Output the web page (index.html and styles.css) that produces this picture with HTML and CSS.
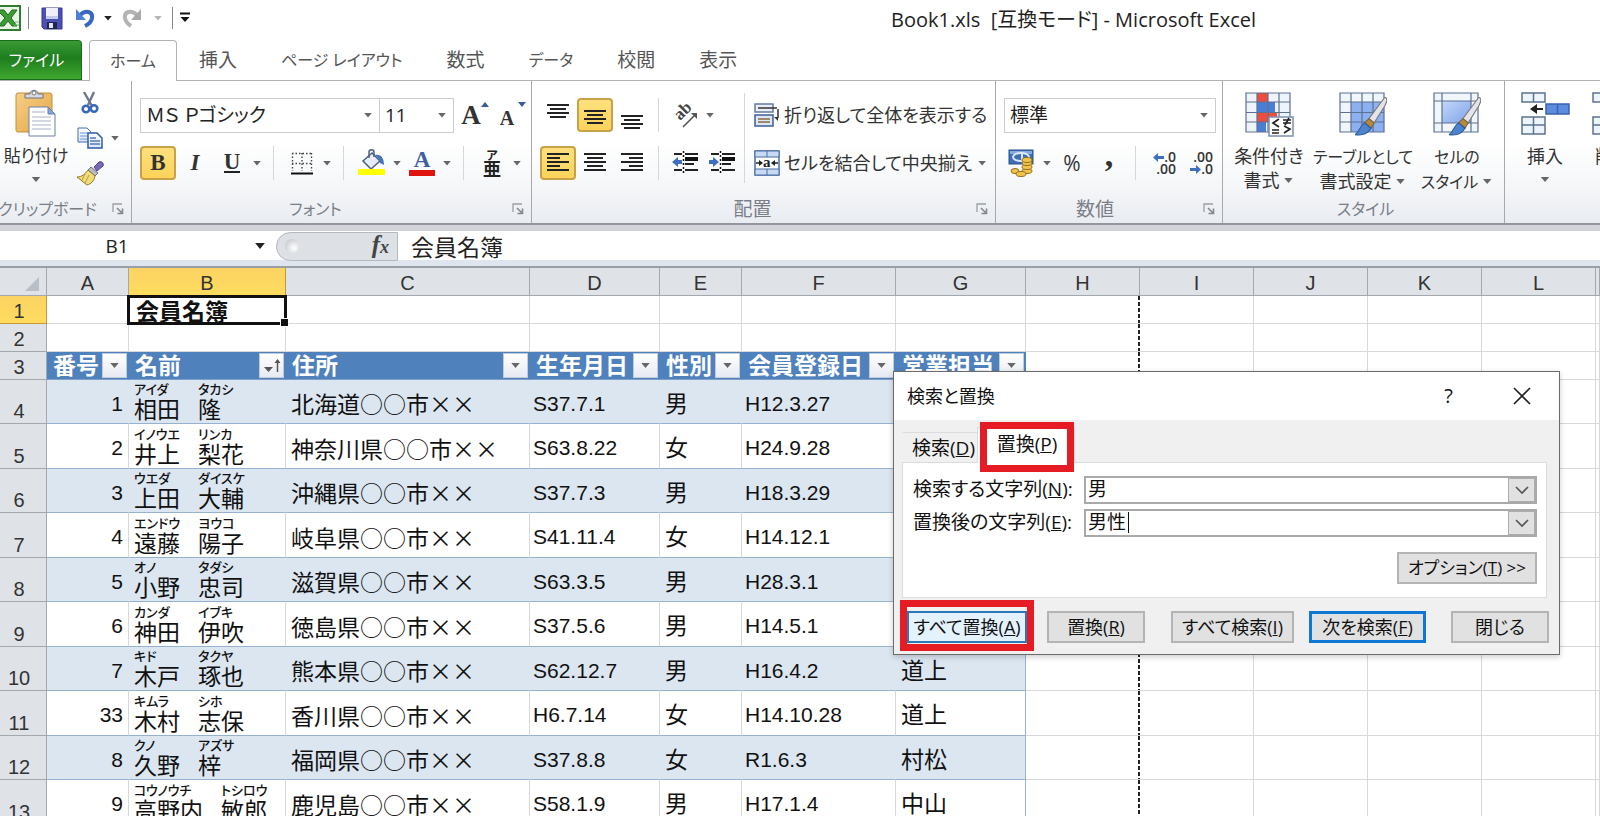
FILE: index.html
```html
<!DOCTYPE html>
<html lang="ja">
<head>
<meta charset="utf-8">
<title>Book1.xls [互換モード] - Microsoft Excel</title>
<link rel="stylesheet" href="styles.css">
</head>
<body>
<svg class="defs" aria-hidden="true">
  <defs>
    <linearGradient id="gBlue" x1="0" y1="0" x2="1" y2="1"><stop offset="0" stop-color="#c3d7fa"/><stop offset="1" stop-color="#7da3ea"/></linearGradient>
    <linearGradient id="gPaper" x1="0" y1="0" x2="0" y2="1"><stop offset="0" stop-color="#ffffff"/><stop offset="1" stop-color="#dbe6f5"/></linearGradient>
    <linearGradient id="gBoard" x1="0" y1="0" x2="1" y2="1"><stop offset="0" stop-color="#f7cf86"/><stop offset="1" stop-color="#e3a544"/></linearGradient>
    <symbol id="launch" viewBox="0 0 12 12"><path d="M1 9V1h9" fill="none" stroke="#9a9da2" stroke-width="1.3"/><path d="M5 5l5 5M10.500 5.500v5h-5" fill="none" stroke="#85888d" stroke-width="1.600"/></symbol>
    <symbol id="brush" viewBox="0 0 30 36"><path d="M28 0c3 1 2 4 0 8L18 24l-5-4z" fill="#e4e4e6" stroke="#77797e"/><path d="M13 20l5 4-3 5-6-5z" fill="#b58a3c" stroke="#7a6235"/><path d="M9 24l6 5c-3 5-9 7-15 6 4-2 4-8 9-11z" fill="#4d84cf" stroke="#2d5a9c"/></symbol>
  </defs>
</svg>
<div class="app">
  <header class="titlebar">
    <div class="quick">
      <svg class="logo" width="21" height="26" viewBox="0 0 21 26"><rect x="-5" y="1" width="25" height="24" fill="#eaf4e6" stroke="#2f7d32" stroke-width="2"/><path d="M-3 5h7l4 5 4-5h5l-6 8 6 8h-5l-4-5-4 5h-6l7-8z" fill="#3d9a35" stroke="#1f6b22"/><path d="M15 17h4M14 20h5" stroke="#7fb77b"/></svg>
      <i class="qsep"></i>
      <button class="q" aria-label="上書き保存"><svg width="22" height="23" viewBox="0 0 22 23"><path d="M1 1h20v21H3l-2-2z" fill="#4b50b4" stroke="#34388f"/><path d="M5 1h12v11H5z" fill="#eef1fb"/><path d="M5 9h12v3H5z" fill="#c4cbea"/><path d="M6 15h10v7H6z" fill="#22264f"/><path d="M8 16h4v5H8z" fill="#dfe3f4"/></svg></button>
      <button class="q" aria-label="元に戻す"><svg width="20" height="20" viewBox="0 0 20 20"><path d="M5 7c6-6 13-3 12 3-.5 4-3 6-7 8" fill="none" stroke="#3a68c0" stroke-width="4"/><path d="M1 1v11h10z" fill="#4f80d6"/></svg></button>
      <i class="tri dark"></i>
      <button class="q" aria-label="やり直し"><svg width="20" height="20" viewBox="0 0 20 20"><path d="M15 7C9 1 2 4 3 10c.5 4 3 6 6 8" fill="none" stroke="#b4b4b4" stroke-width="4"/><path d="M19 1v11H9z" fill="#a9a9a9"/></svg></button>
      <i class="tri pale"></i>
      <i class="qsep"></i>
      <button class="q more" aria-label="カスタマイズ"><svg width="12" height="12" viewBox="0 0 12 12"><path d="M1 1.500h10" stroke="#111" stroke-width="2"/><path d="M1.500 5h9L6 10z" fill="#111"/></svg></button>
    </div>
    <h1 class="doc-title">Book1.xls&nbsp; [互換モード] - Microsoft Excel</h1>
  </header>

  <nav class="tabs">
    <button class="tab file kana">ファイル</button>
    <button class="tab active kana">ホーム</button>
    <button class="tab">挿入</button>
    <button class="tab kana">ページ レイアウト</button>
    <button class="tab">数式</button>
    <button class="tab kana">データ</button>
    <button class="tab">校閲</button>
    <button class="tab">表示</button>
  </nav>

  <section class="ribbon">
    <div class="group clipboard">
      <div class="body">
        <button class="big paste"><svg width="44" height="48" viewBox="0 0 44 48"><rect x="2" y="4" width="36" height="39" rx="2" fill="url(#gBoard)" stroke="#c58e3a"/><path d="M11 9V5h5c0-5 8-5 8 0h5v4z" fill="#d9dbe0" stroke="#6f7278"/><circle cx="20" cy="4" r="2" fill="#fff" stroke="#6f7278"/><path d="M15 18h19l7 7v22H15z" fill="#fff" stroke="#6881a8"/><path d="M34 18v7h7z" fill="#7fa6de" stroke="#6881a8"/><path d="M18 23h13M18 28h19M18 32h19M18 36h19M18 40h19" stroke="#aab4c4"/></svg><span>貼り付け</span><i class="tri"></i></button>
        <div class="stack">
          <button class="tool" aria-label="切り取り"><svg width="18" height="24" viewBox="0 0 18 24"><path d="M3 1l8 14M13 1L7 14" stroke="#6b7890" stroke-width="2.400" fill="none"/><circle cx="5" cy="18" r="3.300" fill="none" stroke="#3968b4" stroke-width="2.600"/><circle cx="13" cy="17.500" r="3.300" fill="none" stroke="#3968b4" stroke-width="2.600"/></svg></button>
          <div class="row"><button class="tool" aria-label="コピー"><svg width="26" height="22" viewBox="0 0 26 22"><path d="M1 1h9l4 4v10H1z" fill="url(#gPaper)" stroke="#3f6db3"/><path d="M3 6h8M3 9h8M3 12h8" stroke="#6f96d3"/><path d="M11 6h9l5 5v10H11z" fill="url(#gPaper)" stroke="#2f5ca6" stroke-width="1.500"/><path d="M13 11h6M13 14h10M13 17h10" stroke="#4f7ac0" stroke-width="1.500"/></svg></button><i class="tri"></i></div>
          <button class="tool" aria-label="書式のコピー"><svg width="28" height="25" viewBox="0 0 28 25"><path d="M18 6l5-5c3-1 5 1 4 4l-6 5z" fill="#7a68b6" stroke="#54458c"/><path d="M15 6l7 6-3 3-7-6z" fill="#b9bcc4" stroke="#6e7078"/><path d="M12 9l7 6c-1 5-4 8-8 9L1 16c5 0 8-3 11-7z" fill="#f2dc7a" stroke="#8f7a2c"/><path d="M9 13l-3 6M13 14l-4 8" stroke="#b59a3a"/></svg></button>
        </div>
      </div>
      <div class="foot"><span class="kana">クリップボード</span><button class="launch" aria-label="クリップボードの詳細"><svg width="12" height="12"><use href="#launch"/></svg></button></div>
    </div>

    <div class="group font">
      <div class="body rows">
        <div class="row">
          <label class="combo name"><select aria-label="フォント"><option>ＭＳ Ｐゴシック</option></select><i class="tri"></i></label><label class="combo size"><select aria-label="フォント サイズ"><option>11</option></select><i class="tri"></i></label>
          <button class="tool" aria-label="フォント サイズの拡大"><span class="serif grow">A</span><svg class="mark" width="8" height="6" viewBox="0 0 8 6"><path d="M0 5h8L4 0z" fill="#3d5a9a"/></svg></button>
          <button class="tool" aria-label="フォント サイズの縮小"><span class="serif shrink">A</span><svg class="mark" width="8" height="6" viewBox="0 0 8 6"><path d="M0 0h8L4 5z" fill="#3d5a9a"/></svg></button>
        </div>
        <div class="row">
          <button class="tool on"><b class="serif">B</b></button>
          <button class="tool"><em class="serif">I</em></button>
          <button class="tool"><span class="serif under">U</span></button><i class="tri"></i>
          <i class="sep"></i>
          <button class="tool" aria-label="罫線"><svg width="22" height="23" viewBox="0 0 22 23"><path d="M1 1.500h20M1 11.500h20M1.500 1v18M11 1v18M20.500 1v18" stroke="#444" stroke-width="1.400" stroke-dasharray="1.500 2"/><path d="M0 21.500h22" stroke="#111" stroke-width="2"/></svg></button><i class="tri"></i>
          <i class="sep"></i>
          <button class="tool" aria-label="塗りつぶしの色"><svg width="28" height="28" viewBox="0 0 28 28"><path d="M5 12l9-8 8 8-9 8z" fill="#e6ecf6" stroke="#4d5f80" stroke-width="1.500"/><path d="M11 9V3c0-3 5-3 5 0v5" fill="none" stroke="#4d5f80" stroke-width="1.500"/><path d="M17 6c6-1 9 3 9 10l-4-2-1-4z" fill="#4474c0"/><path d="M0 20h27v6H0z" fill="#ffff00"/></svg></button><i class="tri"></i>
          <button class="tool" aria-label="フォントの色"><span class="fontcolor serif">A</span></button><i class="tri"></i>
          <i class="sep"></i>
          <button class="tool phon"><small>ア</small><span>亜</span></button><i class="tri"></i>
        </div>
      </div>
      <div class="foot"><span class="kana">フォント</span><button class="launch" aria-label="フォントの詳細"><svg width="12" height="12"><use href="#launch"/></svg></button></div>
    </div>

    <div class="group align">
      <div class="body">
        <div class="rows">
          <div class="row">
            <button class="tool" aria-label="上揃え"><svg width="22" height="30" viewBox="0 0 22 30"><path d="M0 5h22M3 9h16M0 13h22M3 17h16" stroke="#222" stroke-width="2"/></svg></button>
            <button class="tool on" aria-label="上下中央揃え"><svg width="22" height="30" viewBox="0 0 22 30"><path d="M0 11h22M3 15h16M0 19h22M3 23h16" stroke="#222" stroke-width="2"/></svg></button>
            <button class="tool" aria-label="下揃え"><svg width="22" height="30" viewBox="0 0 22 30"><path d="M0 16h22M3 20h16M0 24h22M3 28h16" stroke="#222" stroke-width="2"/></svg></button>
            <i class="sep tight"></i>
            <button class="tool" aria-label="方向"><svg width="28" height="28" viewBox="0 0 28 28"><text transform="translate(9 20) rotate(-45)" class="abtext">ab</text><path d="M12 26L24 14" stroke="#555" stroke-width="1.600"/><path d="M26 12v6l-6-6z" fill="#555"/></svg></button><i class="tri"></i>
          </div>
          <div class="row">
            <button class="tool on" aria-label="左揃え"><svg width="22" height="22" viewBox="0 0 22 22"><path d="M0 2h22M0 6h13M0 10h22M0 14h13M0 18h22" stroke="#222" stroke-width="2"/></svg></button>
            <button class="tool" aria-label="中央揃え"><svg width="22" height="22" viewBox="0 0 22 22"><path d="M0 2h22M3 6h16M0 10h22M3 14h16M0 18h22" stroke="#222" stroke-width="2"/></svg></button>
            <button class="tool" aria-label="右揃え"><svg width="22" height="22" viewBox="0 0 22 22"><path d="M0 2h22M8 6h14M0 10h22M8 14h14M0 18h22" stroke="#222" stroke-width="2"/></svg></button>
            <i class="sep tight"></i>
            <button class="tool" aria-label="インデントを減らす"><svg width="26" height="26" viewBox="0 0 26 26"><path d="M2 4h8M13 4h13M13 14h9M2 20h8M13 20h13" stroke="#222" stroke-width="2"/><path d="M13 9h13" stroke="#111" stroke-width="4"/><path d="M11.500 1v24" stroke="#111" stroke-width="1.500" stroke-dasharray="2 2"/><path d="M0 12l6-5v3h4v4H6v3z" fill="#3f6fc0"/></svg></button>
            <button class="tool" aria-label="インデントを増やす"><svg width="26" height="26" viewBox="0 0 26 26"><path d="M2 4h8M13 4h13M13 14h9M2 20h8M13 20h13" stroke="#222" stroke-width="2"/><path d="M13 9h13" stroke="#111" stroke-width="4"/><path d="M11.500 1v24" stroke="#111" stroke-width="1.500" stroke-dasharray="2 2"/><path d="M10 12L4 7v3H0v4h4v3z" fill="#3f6fc0"/></svg></button>
          </div>
        </div>
        <i class="tallsep"></i>
        <div class="rows">
          <button class="row wide"><svg width="26" height="26" viewBox="0 0 26 26"><rect x="1" y="2" width="18" height="8" fill="#e9eff8" stroke="#667a9c" stroke-width="1.500"/><path d="M4 6h19" stroke="#333" stroke-width="1.500"/><rect x="1" y="13" width="18" height="11" fill="#dbe7f8" stroke="#3f5f95" stroke-width="1.500"/><path d="M4 17h12M4 20h12" stroke="#8c6b3e" stroke-width="1.500"/><path d="M24 7v9" stroke="#333" stroke-width="1.500"/><path d="M20 15h4v4z" fill="#333"/></svg><span>折り返して全体を表示する</span></button>
          <button class="row wide"><svg width="26" height="26" viewBox="0 0 26 26"><rect x="1" y="1" width="24" height="24" fill="#fff" stroke="#4a6da6" stroke-width="1.500"/><path d="M1 1h24v6H1zM1 19h24v6H1z" fill="#c7daf3" stroke="#4a6da6"/><path d="M13 1v6M13 19v6" stroke="#4a6da6"/><path d="M2 13h6M18 13h6" stroke="#222" stroke-width="1.600"/><path d="M9 13l-4-3v6zM17 13l4-3v6z" fill="#222"/><text x="9" y="17" class="atext">a</text></svg><span>セルを結合して中央揃え</span><i class="tri"></i></button>
        </div>
      </div>
      <div class="foot"><span>配置</span><button class="launch" aria-label="配置の詳細"><svg width="12" height="12"><use href="#launch"/></svg></button></div>
    </div>

    <div class="group number">
      <div class="body rows">
        <div class="row"><label class="combo fmt"><select aria-label="表示形式"><option>標準</option></select><i class="tri"></i></label></div>
        <div class="row">
          <button class="tool" aria-label="通貨表示形式"><svg width="28" height="28" viewBox="0 0 28 28"><rect x="1" y="1" width="24" height="14" fill="#3f6db8" stroke="#28508f"/><path d="M2 2h22v3H2z" fill="#86abe0"/><ellipse cx="13" cy="8" rx="8" ry="4" fill="none" stroke="#dbe8fa" stroke-width="2"/><path d="M14 5v7" stroke="#dbe8fa" stroke-width="2"/><g fill="#f0c44b" stroke="#96701d"><ellipse cx="19" cy="22" rx="5" ry="2.500"/><ellipse cx="19" cy="18" rx="5" ry="2.500"/><ellipse cx="19" cy="14" rx="5" ry="2.500"/><ellipse cx="19" cy="11" rx="5" ry="2.500"/><ellipse cx="7" cy="22" rx="4" ry="2.500"/><ellipse cx="13" cy="25" rx="5" ry="2.500"/></g></svg></button><i class="tri"></i>
          <button class="tool pct">%</button>
          <button class="tool comma">,</button>
          <i class="sep tight"></i>
          <button class="tool dec" aria-label="小数点以下の表示桁数を増やす"><span><svg width="11" height="9" viewBox="0 0 11 9"><path d="M0 4.500L5 0v3h6v3H5v3z" fill="#3f6fc0"/></svg>.0</span><span>.00</span></button>
          <button class="tool dec" aria-label="小数点以下の表示桁数を減らす"><span>.00</span><span><svg width="11" height="9" viewBox="0 0 11 9"><path d="M11 4.500L6 0v3H0v3h6v3z" fill="#3f6fc0"/></svg>.0</span></button>
        </div>
      </div>
      <div class="foot"><span>数値</span><button class="launch" aria-label="数値の詳細"><svg width="12" height="12"><use href="#launch"/></svg></button></div>
    </div>

    <div class="group styles">
      <div class="body">
        <button class="big"><svg width="50" height="48" viewBox="0 0 50 48"><path d="M2 4h44v39H2z" fill="#eef4fc"/><path d="M13 4h11v9H13zM13 24h20v9H13z" fill="#ee4c3c"/><path d="M13 13h18v11H13zM13 33h9v10h-9z" fill="#4a7ed6"/><path d="M2 4h44v39H2zM2 13h44M2 23.500h44M2 33h44M13 4v39M24 4v39M35 4v39" fill="none" stroke="#5d7192" stroke-width="1.200"/><rect x="25" y="28" width="24" height="19" fill="#fff" stroke="#7c8fae" stroke-width="1.500"/><path d="M35 30l-6 4 6 4M28 41h7M28 44h7M40 37l6 3-6 4M39 31h8M39 34h8M45 29l-4 7" fill="none" stroke="#222" stroke-width="1.700"/></svg><span>条件付き<br>書式<i class="tri"></i></span></button>
        <button class="big mid"><svg width="50" height="48" viewBox="0 0 50 48"><path d="M2 4h44v39H2z" fill="#f1f6fd"/><path d="M13 13h33v30H13z" fill="#8db0f0"/><path d="M2 4h44v39H2zM2 13h44M2 23.500h44M2 33h44M13 4v39M24 4v39M35 4v39" fill="none" stroke="#5d7192" stroke-width="1.200"/><use href="#brush" x="17" y="8" width="32" height="39"/></svg><span><small class="kana">テーブルとして</small><br>書式設定<i class="tri"></i></span></button>
        <button class="big"><svg width="50" height="48" viewBox="0 0 50 48"><path d="M2 4h44v39H2z" fill="#f1f6fd"/><path d="M10 12h29v22H10z" fill="url(#gBlue)"/><path d="M2 4h44v39H2zM2 12h44M2 34h44M10 4v39M39 4v39" fill="none" stroke="#5d7192" stroke-width="1.200"/><use href="#brush" x="17" y="8" width="32" height="39"/></svg><span><small class="kana">セルの</small><br><small class="kana">スタイル</small><i class="tri"></i></span></button>
      </div>
      <div class="foot"><span class="kana">スタイル</span></div>
    </div>

    <div class="group cells">
      <div class="body">
        <button class="big"><svg width="50" height="48" viewBox="0 0 50 48"><path d="M2 4h23v9H2zM13.500 4v9M2 28h23v17H2zM13.500 28v17M2 36h23" fill="#eef4fc" stroke="#5d7192" stroke-width="1.500"/><path d="M26 15h23v10H26zM37.500 15v10" fill="#5b8ce0" stroke="#3a63ab" stroke-width="1.500"/><path d="M12 20h11" stroke="#222" stroke-width="2"/><path d="M10 20l7-5v10z" fill="#222"/></svg><span>挿入</span><i class="tri"></i></button>
        <button class="big del"><svg width="50" height="48" viewBox="0 0 50 48"><path d="M5 4h23v9H5zM16.500 4v9M5 28h23v17H5zM16.500 28v17M5 36h23" fill="#eef4fc" stroke="#5d7192" stroke-width="1.500"/></svg><span>削除</span><i class="tri"></i></button>
      </div>
      <div class="foot"><span class="kana">セル</span></div>
    </div>
  </section>

  <section class="formula-bar">
    <input class="name-box" value="B1" aria-label="名前ボックス">
    <i class="tri dark"></i>
    <div class="fx"><i class="knob"></i><button class="fxbtn"><i>f</i><i class="x">x</i></button></div>
    <input class="formula" value="会員名簿" aria-label="数式バー">
  </section>

  <main class="sheet">
    <table class="grid">
      <colgroup><col class="w47"><col class="w82"><col class="w157"><col class="w244"><col class="w130"><col class="w82"><col class="w154"><col class="w130"><col class="w114"><col class="w114"><col class="w114"><col class="w114"><col class="w114"><col></colgroup>
      <thead><tr><th class="corner"><svg width="15" height="15" viewBox="0 0 15 15"><path d="M14 0v14H0z" fill="#b9bfc8"/></svg></th><th>A</th><th class="sel">B</th><th>C</th><th>D</th><th>E</th><th>F</th><th>G</th><th>H</th><th>I</th><th>J</th><th>K</th><th>L</th><th></th></tr></thead>
      <tbody>
        <tr class="r1"><th class="sel">1</th><td></td><td class="cursor"><span class="ctext">会員名簿</span><i class="frame"></i></td><td></td><td></td><td></td><td></td><td></td><td class="pb"></td><td></td><td></td><td></td><td></td><td></td></tr>
        <tr class="r2"><th>2</th><td></td><td></td><td></td><td></td><td></td><td></td><td></td><td class="pb"></td><td></td><td></td><td></td><td></td><td></td></tr>
        <tr class="r3"><th>3</th><td class="h"><div><span>番号</span><button aria-label="番号で絞り込み"><i class="tri"></i></button></div></td><td class="h"><div><span>名前</span><button aria-label="名前で絞り込み"><svg width="18" height="18" viewBox="0 0 18 18"><path d="M1 10h9l-4.500 5z" fill="#555"/><path d="M14.500 3v12" stroke="#555" stroke-width="1.500"/><path d="M11.500 6l3-4 3 4z" fill="#555"/></svg></button></div></td><td class="h"><div><span>住所</span><button aria-label="住所で絞り込み"><i class="tri"></i></button></div></td><td class="h"><div><span>生年月日</span><button aria-label="生年月日で絞り込み"><i class="tri"></i></button></div></td><td class="h"><div><span>性別</span><button aria-label="性別で絞り込み"><i class="tri"></i></button></div></td><td class="h"><div><span>会員登録日</span><button aria-label="会員登録日で絞り込み"><i class="tri"></i></button></div></td><td class="h"><div><span>営業担当</span><button aria-label="営業担当で絞り込み"><i class="tri"></i></button></div></td><td class="pb"></td><td></td><td></td><td></td><td></td><td></td></tr>
        <tr class="d band"><th>4</th><td>1</td><td><div class="nm"><ruby>相田<rt>アイダ</rt></ruby><ruby>隆<rt>タカシ</rt></ruby></div></td><td>北海道○○市××</td><td>S37.7.1</td><td>男</td><td>H12.3.27</td><td></td><td class="pb"></td><td></td><td></td><td></td><td></td><td></td></tr>
        <tr class="d"><th>5</th><td>2</td><td><div class="nm"><ruby>井上<rt>イノウエ</rt></ruby><ruby>梨花<rt>リンカ</rt></ruby></div></td><td>神奈川県○○市××</td><td>S63.8.22</td><td>女</td><td>H24.9.28</td><td></td><td class="pb"></td><td></td><td></td><td></td><td></td><td></td></tr>
        <tr class="d band"><th>6</th><td>3</td><td><div class="nm"><ruby>上田<rt>ウエダ</rt></ruby><ruby>大輔<rt>ダイスケ</rt></ruby></div></td><td>沖縄県○○市××</td><td>S37.7.3</td><td>男</td><td>H18.3.29</td><td></td><td class="pb"></td><td></td><td></td><td></td><td></td><td></td></tr>
        <tr class="d"><th>7</th><td>4</td><td><div class="nm"><ruby>遠藤<rt>エンドウ</rt></ruby><ruby>陽子<rt>ヨウコ</rt></ruby></div></td><td>岐阜県○○市××</td><td>S41.11.4</td><td>女</td><td>H14.12.1</td><td></td><td class="pb"></td><td></td><td></td><td></td><td></td><td></td></tr>
        <tr class="d band"><th>8</th><td>5</td><td><div class="nm"><ruby>小野<rt>オノ</rt></ruby><ruby>忠司<rt>タダシ</rt></ruby></div></td><td>滋賀県○○市××</td><td>S63.3.5</td><td>男</td><td>H28.3.1</td><td></td><td class="pb"></td><td></td><td></td><td></td><td></td><td></td></tr>
        <tr class="d"><th>9</th><td>6</td><td><div class="nm"><ruby>神田<rt>カンダ</rt></ruby><ruby>伊吹<rt>イブキ</rt></ruby></div></td><td>徳島県○○市××</td><td>S37.5.6</td><td>男</td><td>H14.5.1</td><td></td><td class="pb"></td><td></td><td></td><td></td><td></td><td></td></tr>
        <tr class="d band"><th>10</th><td>7</td><td><div class="nm"><ruby>木戸<rt>キド</rt></ruby><ruby>琢也<rt>タクヤ</rt></ruby></div></td><td>熊本県○○市××</td><td>S62.12.7</td><td>男</td><td>H16.4.2</td><td>道上</td><td class="pb"></td><td></td><td></td><td></td><td></td><td></td></tr>
        <tr class="d"><th>11</th><td>33</td><td><div class="nm"><ruby>木村<rt>キムラ</rt></ruby><ruby>志保<rt>シホ</rt></ruby></div></td><td>香川県○○市××</td><td>H6.7.14</td><td>女</td><td>H14.10.28</td><td>道上</td><td class="pb"></td><td></td><td></td><td></td><td></td><td></td></tr>
        <tr class="d band"><th>12</th><td>8</td><td><div class="nm"><ruby>久野<rt>クノ</rt></ruby><ruby>梓<rt>アズサ</rt></ruby></div></td><td>福岡県○○市××</td><td>S37.8.8</td><td>女</td><td>R1.6.3</td><td>村松</td><td class="pb"></td><td></td><td></td><td></td><td></td><td></td></tr>
        <tr class="d"><th>13</th><td>9</td><td><div class="nm"><ruby>高野内<rt>コウノウチ</rt></ruby><ruby>敏郎<rt>トシロウ</rt></ruby></div></td><td>鹿児島○○市××</td><td>S58.1.9</td><td>男</td><td>H17.1.4</td><td>中山</td><td class="pb"></td><td></td><td></td><td></td><td></td><td></td></tr>
      </tbody>
    </table>
  </main>

  <div class="dialog" role="dialog" aria-label="検索と置換">
    <div class="dlg-title"><span>検索と置換</span><button class="help">?</button><button class="close" aria-label="閉じる"><svg width="18" height="18" viewBox="0 0 18 18"><path d="M1 1l16 16M17 1L1 17" stroke="#222" stroke-width="1.600"/></svg></button></div>
    <div class="dlg-tabs"><button class="dtab">検索(<u>D</u>)</button><button class="dtab cur">置換(<u>P</u>)<i class="mark-box"></i></button></div>
    <div class="panel">
      <label for="find">検索する文字列(<u>N</u>):</label>
      <div class="field"><input id="find" value="男"><button aria-label="検索履歴"><svg width="14" height="9" viewBox="0 0 14 9"><path d="M1 1l6 6 6-6" fill="none" stroke="#555" stroke-width="1.600"/></svg></button></div>
      <label for="repl">置換後の文字列(<u>E</u>):</label>
      <div class="field"><input id="repl" value="男性"><i class="caret"></i><button aria-label="置換履歴"><svg width="14" height="9" viewBox="0 0 14 9"><path d="M1 1l6 6 6-6" fill="none" stroke="#555" stroke-width="1.600"/></svg></button></div>
      <button class="btn opt">オプション(<u>T</u>) &gt;&gt;</button>
    </div>
    <div class="dlg-foot">
      <button class="btn all hot">すべて置換(<u>A</u>)<i class="mark-box"></i></button>
      <button class="btn rep">置換(<u>R</u>)</button>
      <button class="btn findall">すべて検索(<u>I</u>)</button>
      <button class="btn next">次を検索(<u>F</u>)</button>
      <button class="btn shut">閉じる</button>
    </div>
  </div>
</div>
</body>
</html>
```
FILE: styles.css
```css
* { box-sizing: border-box; }
body { margin: 0; font-family: "Open Sans", "Noto Sans CJK JP", sans-serif; font-feature-settings: "palt"; font-size: 19px; line-height: 24px; color: #333; }
button, input, select { font: inherit; font-feature-settings: inherit; color: inherit; background: none; border: 0; padding: 0; margin: 0; white-space: nowrap; }
.defs { position: absolute; width: 0; height: 0; }
svg { display: block; flex: none; }
.kana { font-size: 16px; }
.app { position: relative; height: 100vh; overflow: hidden; background: #fff; display: flex; flex-direction: column; }
.app > * { flex-shrink: 0; }
.tri { flex: none; display: inline-block; width: 12px; height: 5px; background: #666; clip-path: polygon(15% 0, 85% 0, 50% 100%); }
.tri.dark { background: #222; }
.tri.pale { background: #b5b5b5; }

/* title bar */
.titlebar { height: 40px; display: flex; justify-content: space-between; align-items: center; }
.quick { display: flex; align-items: center; height: 36px; align-self: flex-start; }
.qsep { width: 1px; height: 22px; background: #888; margin: 0 12px 0 7px; }
.quick .q { margin-right: 12px; }
.quick .tri { margin: 0 8px 0 -5px; }
.quick .tri.pale { margin: 0 1px 0 -2px; }
.quick .more { margin-right: 0; }
.quick .qsep:nth-of-type(n+4) { margin-right: 6px; }
.doc-title { margin: 0 344px 0 0; font-size: 20px; font-weight: 400; color: #222; }

/* ribbon tabs */
.tabs { display: flex; height: 41px; border-bottom: 1px solid #b3b3b3; color: #555; }
.tab { padding: 0 22px; height: 40px; }
.tab.file { width: 82px; padding: 0 8px 0 0; margin-right: 7px; color: #fff; background: linear-gradient(#3a9a35, #1e7d1e 45%, #3fa82f); border: 1px solid #176d1b; border-left: 0; border-radius: 0 4px 0 0; }
.tab.active { width: 88px; height: 41px; padding: 0; border: 1px solid #b3b3b3; border-bottom: 0; border-radius: 4px 4px 0 0; background: #fff; }

/* ribbon */
.ribbon { display: flex; height: 144px; background: linear-gradient(#fff 45%, #f4f6f8 75%, #e9ecf1); border-bottom: 2px solid #93969c; overflow: hidden; }
.group { flex: none; display: flex; flex-direction: column; border-right: 1px solid #a6a9ae; }
.body { display: flex; height: 115px; }
.rows { display: flex; flex-direction: column; gap: 12px; padding-top: 16px; }
.row { display: flex; align-items: center; height: 36px; gap: 1px; }
.foot { position: relative; height: 25px; display: flex; justify-content: center; align-items: center; color: #7b7e88; padding-right: 12px; }
.styles .foot { padding: 0; }
.launch { position: absolute; right: 7px; top: 7px; }
.tool { flex: none; position: relative; width: 36px; height: 34px; display: flex; align-items: center; justify-content: center; }
.tool.on { background: linear-gradient(#fde07e, #fcd35a); border: 2px solid #c8a248; border-radius: 4px; }
.sep { width: 1px; height: 34px; background: #d4d7dc; margin: 0 9px; flex: none; }
.sep.tight { margin: 0 7px; }
.tallsep { width: 1px; height: 90px; margin: 12px 9px 0 4px; background: #d4d7dc; }
.big { width: 84px; display: flex; flex-direction: column; align-items: center; padding-top: 8px; text-align: center; font-size: 18px; }
.big > span { padding-top: 7px; line-height: 24px; }
.big > .tri { margin-top: 9px; }
.big span .tri { margin: 0 0 4px 3px; }
.serif { font-family: "Liberation Serif", serif; font-weight: 700; font-size: 23px; }
.under { border-bottom: 2px solid #222; line-height: 18px; }
.tool .grow { font-size: 27px; margin-right: 4px; }
.tool .shrink { font-size: 20px; margin: 5px 6px 0 0; }
.mark { position: absolute; right: 2px; top: 4px; }
.fontcolor { width: 26px; text-align: center; line-height: 20px; color: #3d5f9f; border-bottom: 6px solid #e0140f; }
.phon { flex-direction: column; font-weight: 700; color: #222; font-size: 18px; line-height: 16px; }
.phon small { font-size: 12px; line-height: 11px; }
.abtext { font: 700 17px "Liberation Serif", serif; fill: #444; }
.atext { font: 700 15px "Liberation Serif", serif; fill: #222; }
.combo { display: flex; align-items: center; height: 35px; border: 1px solid #c9ccd1; background: #fff; color: #222; padding: 0 5px; }
.combo select { appearance: none; flex: 1; min-width: 0; height: 30px; outline: 0; }

.clipboard { width: 132px; }
.clipboard .big { width: 72px; font-size: 17px; }
.clipboard .foot { padding-right: 36px; white-space: nowrap; }
.stack { padding-top: 5px; display: flex; flex-direction: column; }
.font { width: 400px; padding-left: 8px; }
.combo.name { width: 240px; }
.combo.size { width: 75px; margin-left: -2px; }
.font .foot { padding-right: 40px; }
.align { width: 464px; padding-left: 8px; }
.align .foot { padding-right: 30px; }
.wide { font-size: 18px; }
.wide span { padding-left: 3px; }
.wide .tri { margin-left: 3px; }
.number { width: 227px; padding-left: 8px; }
.number .foot { padding-right: 36px; }
.combo.fmt { width: 212px; }
.number .tool.pct { font-size: 21px; }
.number .tool.comma { font: 700 34px/20px "Liberation Serif", serif; padding-bottom: 16px; }
.dec { flex-direction: column; align-items: flex-end; font-size: 14px; line-height: 12px; font-weight: 600; padding-right: 4px; }
.dec span { display: flex; align-items: center; }
.styles { width: 282px; padding-left: 4px; }
.big.mid { width: 104px; }
.cells { width: 224px; border-right: 0; }
.cells .big { width: 80px; }
.cells .big.del { width: 56px; }
.cells .foot { padding: 0; }

/* formula bar */
.formula-bar { display: flex; align-items: center; height: 41px; padding: 6px 0 5px; background: linear-gradient(#d4d6dc, #cfd2d8 14%, #fff 14%, #fff 86%, #dfe5ee 86%); color: #222; }
.name-box { width: 234px; height: 29px; text-align: center; font-size: 19px; outline: 0; }
.formula-bar > .tri { width: 14px; height: 6px; margin: 0 9px 0 19px; }
.fx { width: 122px; height: 29px; display: flex; align-items: center; justify-content: space-between; padding: 0 8px 0 8px; background: #dde0e5; border: 1px solid #b4b8bf; border-radius: 15px 0 0 15px; }
.knob { width: 14px; height: 14px; border-radius: 50%; background: radial-gradient(circle at 65% 65%, #fff, #b9bdc4); }
.fxbtn { font: italic 700 25px/26px "Liberation Serif", serif; color: #444; }
.fxbtn .x { font-size: 18px; }
.formula { flex: 1; height: 29px; padding-left: 13px; font-size: 23px; outline: 0; font-feature-settings: normal; }

/* sheet */
.sheet { border-top: 2px solid #9b9ea4; }
.grid { width: 100%; table-layout: fixed; border-collapse: separate; border-spacing: 0; color: #111; font-family: "Liberation Sans", "Noto Sans CJK JP", sans-serif; font-feature-settings: normal; }
.w47 { width: 47px; } .w82 { width: 82px; } .w157 { width: 157px; } .w244 { width: 244px; } .w130 { width: 130px; } .w154 { width: 154px; } .w114 { width: 114px; }
.grid th { background: #dfe2e7; border-right: 1px solid #a3a8af; border-bottom: 1px solid #a3a8af; font-weight: 400; font-size: 20px; line-height: 22px; padding: 0; color: #333; }
.grid thead th { height: 28px; padding-top: 3px; }
.grid thead th.corner { padding: 5px 6px 0 0; }
.corner svg { margin-left: auto; }
.grid th.sel { background: linear-gradient(#fbd363, #ffdc5e); border-color: #c7983a; }
.grid td { border-right: 1px solid #d6d8db; border-bottom: 1px solid #d6d8db; padding: 0 5px; white-space: nowrap; line-height: 24px; font-size: 23px; }
.grid td.pb { border-right: 0; background: repeating-linear-gradient(#222 0 4px, #fff 4px 6px) right / 2px 100% no-repeat; }
.grid tbody th { padding-right: 8px; vertical-align: bottom; padding-bottom: 1px; }
.r1 > * { height: 28px; }
.r2 > *, .r3 > * { height: 28px; }
.cursor { position: relative; font-weight: 700; }
.ctext { display: block; height: 24px; line-height: 28px; overflow: hidden; padding-left: 2px; }
.frame { position: absolute; inset: -1px -2px -2px -2px; border: 3px solid #111; }
.frame::after { content: ""; position: absolute; right: -5px; bottom: -5px; width: 7px; height: 7px; background: #111; border: 1px solid #fff; box-sizing: content-box; }
.grid td.h { background: #4f81bd; color: #fff; font-weight: 700; padding: 0; border-color: #4f81bd; border-bottom-color: #7f9fc8; }
.h div { display: flex; align-items: center; justify-content: space-between; height: 27px; padding: 0 1px 0 6px; }
.h span { overflow: hidden; flex: 1; line-height: 26px; }
.h button { flex: none; width: 25px; height: 25px; display: flex; align-items: center; justify-content: center; background: linear-gradient(#fff, #e6eaf2); border: 1px solid #c2cbdb; }
.d > * { height: 44px; }
.d:nth-child(odd) > * { height: 45px; }
.grid .d td:nth-child(-n+8) { border-bottom-color: #95b3d0; }
.grid .band td:nth-child(-n+8) { background: #dce6f1; border-right-color: #dce6f1; }
.grid .d td:nth-child(8) { border-right-color: #95b3d0; }
.grid .d td:nth-child(2) { text-align: right; font-size: 21px; padding-top: 4px; }
.grid .d td:nth-child(4) { padding-top: 3px; font-family: "Noto Sans CJK JP", sans-serif; }
.grid .d td:nth-child(5), .grid .d td:nth-child(7) { font-size: 21px; padding: 4px 3px 0; }
.grid .d td:nth-child(6), .grid .d td:nth-child(8) { padding-top: 4px; }
.nm { display: flex; gap: 18px; height: 43px; }
.nm ruby { display: flex; flex-direction: column-reverse; justify-content: flex-start; line-height: 25px; min-width: 23px; }
.nm ruby:last-child { width: 46px; }
.nm rt { display: block; font-size: 13px; line-height: 16px; text-align: left; font-feature-settings: "palt"; font-weight: 500; }

/* find and replace dialog */
.dialog { position: absolute; left: 893px; top: 371px; width: 667px; border: 1px solid #6b6b6b; background: #f0f0f0; color: #111; box-shadow: 0 2px 6px #0003; }
.dlg-title { height: 48px; background: #fff; display: flex; align-items: center; padding: 0 28px 0 13px; font-size: 18px; }
.dlg-title span { flex: 1; }
.help { font-size: 20px; margin-right: 60px; }
.dlg-tabs { display: flex; align-items: flex-end; height: 42px; padding-left: 9px; }
.dtab { width: 74px; height: 30px; padding-left: 7px; border-top: 1px solid #dcdcdc; }
.dtab.cur { position: relative; width: 98px; height: 36px; background: #fff; border: 1px solid #dcdcdc; border-bottom: 0; margin-bottom: -1px; padding: 0 0 4px 2px; }
.mark-box { position: absolute; border: 7px solid #e51c24; pointer-events: none; }
.dtab .mark-box { inset: -6px 0 -9px 2px; }
.panel { margin: 0 12px 0 8px; padding: 13px 9px 13px 10px; background: #fff; border: 1px solid #dcdcdc; display: grid; grid-template-columns: 171px 1fr; row-gap: 5px; align-items: center; }
.panel label { padding-bottom: 3px; }
.field { position: relative; display: flex; height: 28px; border: 2px solid #a9a9a9; background: #fff; }
.field input { flex: 1; min-width: 0; padding: 0 0 2px 2px; outline: 0; }
.field button { width: 27px; display: flex; align-items: center; justify-content: center; background: #e1e1e1; border: 1px solid #adadad; }
.caret { position: absolute; left: 42px; top: 1px; width: 1px; height: 21px; background: #111; }
.btn { position: relative; height: 32px; background: #e1e1e1; border: 2px solid #b4b4b4; text-align: center; font-size: 18px; }
.opt { grid-column: 2; justify-self: end; width: 140px; margin-top: 10px; font-size: 17px; }
.dlg-foot { display: flex; padding: 13px 10px 11px 13px; }
.all { width: 120px; margin-right: 20px; }
.rep { width: 98px; margin-right: 26px; }
.findall { width: 123px; margin-right: 15px; }
.next { width: 117px; margin-right: auto; border: 3px solid #0f78d4; }
.shut { width: 98px; }
.btn.hot { background: #e3f2fd; border-color: #2b78b8; }
.hot .mark-box { inset: -13px -9px -10px -9px; }
```
